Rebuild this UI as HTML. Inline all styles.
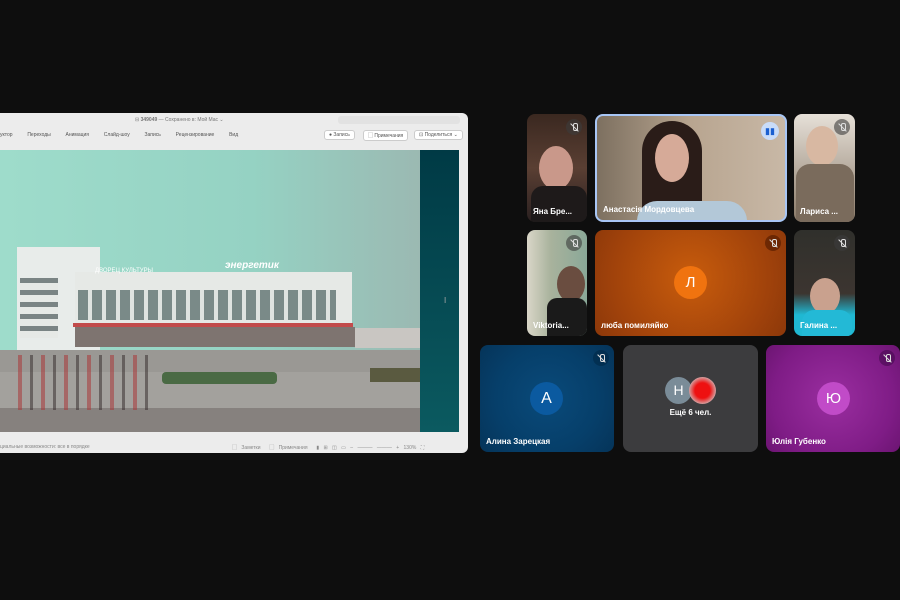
<!DOCTYPE html>
<html><head><meta charset="utf-8"><style>
*{margin:0;padding:0;box-sizing:border-box}
body{width:900px;height:600px;background:#0e0e0e;position:relative;overflow:hidden;font-family:"Liberation Sans","Noto Sans CJK SC",sans-serif}
.a{position:absolute}
.t{position:absolute;border-radius:8px;overflow:hidden}
.n{position:absolute;left:6px;bottom:6px;color:#fff;font-size:8px;font-weight:bold;white-space:nowrap}
.m{position:absolute;top:5px;right:5px;width:16px;height:16px;border-radius:50%;background:rgba(60,60,60,.6)}
.m:after{content:"";position:absolute;left:7px;top:4px;width:3px;height:6px;border:1px solid #ddd;border-radius:2px}
.m:before{content:"";position:absolute;left:3px;top:8px;width:11px;height:1px;background:#ddd;transform:rotate(45deg)}
.av{position:absolute;border-radius:50%;color:#fff;text-align:center}
.tb{font-size:5px;color:#555}
</style></head><body>
<div class="a" style="left:0;top:113px;width:468px;height:340px;background:#ececec;border-radius:0 6px 6px 0"></div>
<div class="a tb" style="left:135px;top:117px;color:#777">⊟ <b>349049</b> — Сохранено в: Мой Mac ⌄</div>
<div class="a" style="left:338px;top:116px;width:122px;height:8px;background:#e2e2e2;border-radius:3px"></div>
<div class="a tb" style="left:0;top:132px;word-spacing:6px">уктор &nbsp;Переходы &nbsp;Анимация &nbsp;Слайд-шоу &nbsp;Запись &nbsp;Рецензирование &nbsp;Вид</div>
<div class="a tb" style="left:324px;top:130px;background:#fff;border:1px solid #ccc;border-radius:3px;padding:1px 4px">● Запись</div>
<div class="a tb" style="left:363px;top:130px;background:#fff;border:1px solid #ccc;border-radius:3px;padding:1px 4px">▢ Примечания</div>
<div class="a tb" style="left:414px;top:130px;background:#fff;border:1px solid #ccc;border-radius:3px;padding:1px 4px">⊡ Поделиться ⌄</div>
<div class="a" style="left:0;top:150px;width:420px;height:282px;background:linear-gradient(90deg,#9edccb,#95d2c3 60%,#9bb9b2);overflow:hidden">
  <div class="a" style="left:0;top:200px;width:420px;height:82px;background:#9a9894"></div>
  <div class="a" style="left:0;top:222px;width:420px;height:38px;background:#a3a19d"></div>
  <div class="a" style="left:0;top:258px;width:420px;height:24px;background:#86817e"></div>
  <div class="a" style="left:17px;top:97px;width:83px;height:103px;background:#e8ecea"></div>
  <div class="a" style="left:75px;top:122px;width:277px;height:72px;background:#e6e9e6"></div>
  <div class="a" style="left:78px;top:140px;width:258px;height:30px;background:repeating-linear-gradient(90deg,#7a8a88 0 10px,#dfe3e0 10px 14px)"></div>
  <div class="a" style="left:20px;top:128px;width:38px;height:60px;background:repeating-linear-gradient(0deg,#e6e9e6 0 7px,#7a8484 7px 12px)"></div>
  <div class="a" style="left:73px;top:173px;width:280px;height:4px;background:#c24b4b"></div>
  <div class="a" style="left:75px;top:177px;width:280px;height:20px;background:#7e7470"></div>
  <div class="a" style="left:355px;top:178px;width:65px;height:20px;background:#c9c6c2"></div>
  <div class="a" style="left:225px;top:110px;font-size:10px;color:#fff;font-style:italic;font-weight:bold">энергетик</div>
  <div class="a" style="left:95px;top:118px;font-size:6px;color:#fff">ДВОРЕЦ КУЛЬТУРЫ</div>
  <div class="a" style="left:10px;top:205px;width:140px;height:55px;background:repeating-linear-gradient(90deg,transparent 0 8px,#a83838 8px 12px,transparent 12px 20px,#3a3030 20px 23px);opacity:.55"></div>
  <div class="a" style="left:162px;top:222px;width:115px;height:12px;background:#4a6a44;border-radius:4px"></div>
  <div class="a" style="left:370px;top:218px;width:50px;height:14px;background:#5a5a40"></div>
</div>
<div class="a" style="left:420px;top:150px;width:39px;height:282px;background:linear-gradient(#003a45,#0b5a60)"></div>
<div class="a" style="left:444px;top:296px;font-size:8px;color:#aaa">I</div>
<div class="a tb" style="left:0;top:444px;color:#888">циальные возможности: все в порядке</div>
<div class="a tb" style="left:232px;top:444px;color:#888;word-spacing:3px">▢ Заметки &nbsp;▢ Примечания &nbsp;▮ ⊞ ◫ ▭ – ——— ——— + 130% ⛶</div>
<div class="t" style="left:527px;top:114px;width:60px;height:108px;background:linear-gradient(#3a2820,#5a3f33 50%,#2a2020)"><div class="av" style="left:12px;top:32px;width:34px;height:44px;background:#c9988a"></div><div class="av" style="left:4px;top:72px;width:56px;height:40px;border-radius:12px 12px 0 0;background:#1e1a1a"></div><div class="m"></div><div class="n">Яна Бре...</div></div>
<div class="t" style="left:595px;top:114px;width:192px;height:108px;background:linear-gradient(90deg,#7d7060,#b8a590 50%,#c8b8a6);border:2px solid #a8c6f5"><div class="av" style="left:45px;top:5px;width:60px;height:105px;border-radius:30px 30px 0 0;background:#2a1c18"></div><div class="av" style="left:58px;top:18px;width:34px;height:48px;background:#d6aa98"></div><div class="av" style="left:40px;top:85px;width:110px;height:30px;border-radius:20px 20px 0 0;background:#b3c8d8"></div><div class="av" style="right:6px;top:6px;width:18px;height:18px;background:#c9dcf8;color:#1a5fd0;font-size:9px;line-height:18px">▮▮</div><div class="n">Анастасія Мордовцева</div></div>
<div class="t" style="left:794px;top:114px;width:61px;height:108px;background:linear-gradient(#e6e0d8,#8a7a68)"><div class="av" style="left:12px;top:12px;width:32px;height:40px;background:#d8b8a2"></div><div class="av" style="left:2px;top:50px;width:58px;height:60px;border-radius:14px 14px 0 0;background:#7a6b5c"></div><div class="m"></div><div class="n">Лариса ...</div></div>
<div class="t" style="left:527px;top:230px;width:60px;height:106px;background:linear-gradient(90deg,#d9d6c8,#a8b29c 40%,#8aa898)"><div class="av" style="left:30px;top:36px;width:28px;height:36px;background:#6a4d40"></div><div class="av" style="left:20px;top:68px;width:40px;height:40px;border-radius:10px 10px 0 0;background:#1a1a1a"></div><div class="m"></div><div class="n">Viktoria...</div></div>
<div class="t" style="left:595px;top:230px;width:191px;height:106px;background:radial-gradient(circle at 50% 45%,#c85c0c,#a0420b 70%,#8c380a)"><div class="av" style="left:79px;top:36px;width:33px;height:33px;background:#f0730f;font-size:15px;line-height:33px">Л</div><div class="m" style="background:rgba(90,30,0,.7)"></div><div class="n">люба помиляйко</div></div>
<div class="t" style="left:794px;top:230px;width:61px;height:106px;background:linear-gradient(#30302c,#3c3530 60%,#1fb8d2 80%)"><div class="av" style="left:16px;top:48px;width:30px;height:36px;background:#c9a18e"></div><div class="av" style="left:8px;top:80px;width:50px;height:30px;border-radius:12px 12px 0 0;background:#23b9d6"></div><div class="m"></div><div class="n">Галина ...</div></div>
<div class="t" style="left:480px;top:345px;width:134px;height:107px;background:radial-gradient(circle at 50% 50%,#0a4a7a,#063f6a 60%,#053459)"><div class="av" style="left:50px;top:37px;width:33px;height:33px;background:#0b5aa0;font-size:16px;line-height:33px">А</div><div class="m" style="background:rgba(0,40,70,.6)"></div><div class="n">Алина Зарецкая</div></div>
<div class="t" style="left:623px;top:345px;width:135px;height:107px;background:#3c3c3e"><div class="av" style="left:42px;top:32px;width:27px;height:27px;background:#7a8c98;font-size:14px;line-height:27px">Н</div><div class="av" style="left:66px;top:32px;width:27px;height:27px;background:radial-gradient(circle,#e11 40%,#ccc 80%)"></div><div class="a" style="left:0;width:135px;top:63px;text-align:center;color:#fff;font-size:8px;font-weight:bold">Ещё 6 чел.</div></div>
<div class="t" style="left:766px;top:345px;width:134px;height:107px;background:radial-gradient(circle at 50% 50%,#9a2ea0,#7f1c86 70%,#6c1572)"><div class="av" style="left:51px;top:37px;width:33px;height:33px;background:#c14bc8;font-size:15px;line-height:33px">Ю</div><div class="m" style="background:rgba(70,10,80,.6)"></div><div class="n">Юлія Губенко</div></div>
</body></html>
